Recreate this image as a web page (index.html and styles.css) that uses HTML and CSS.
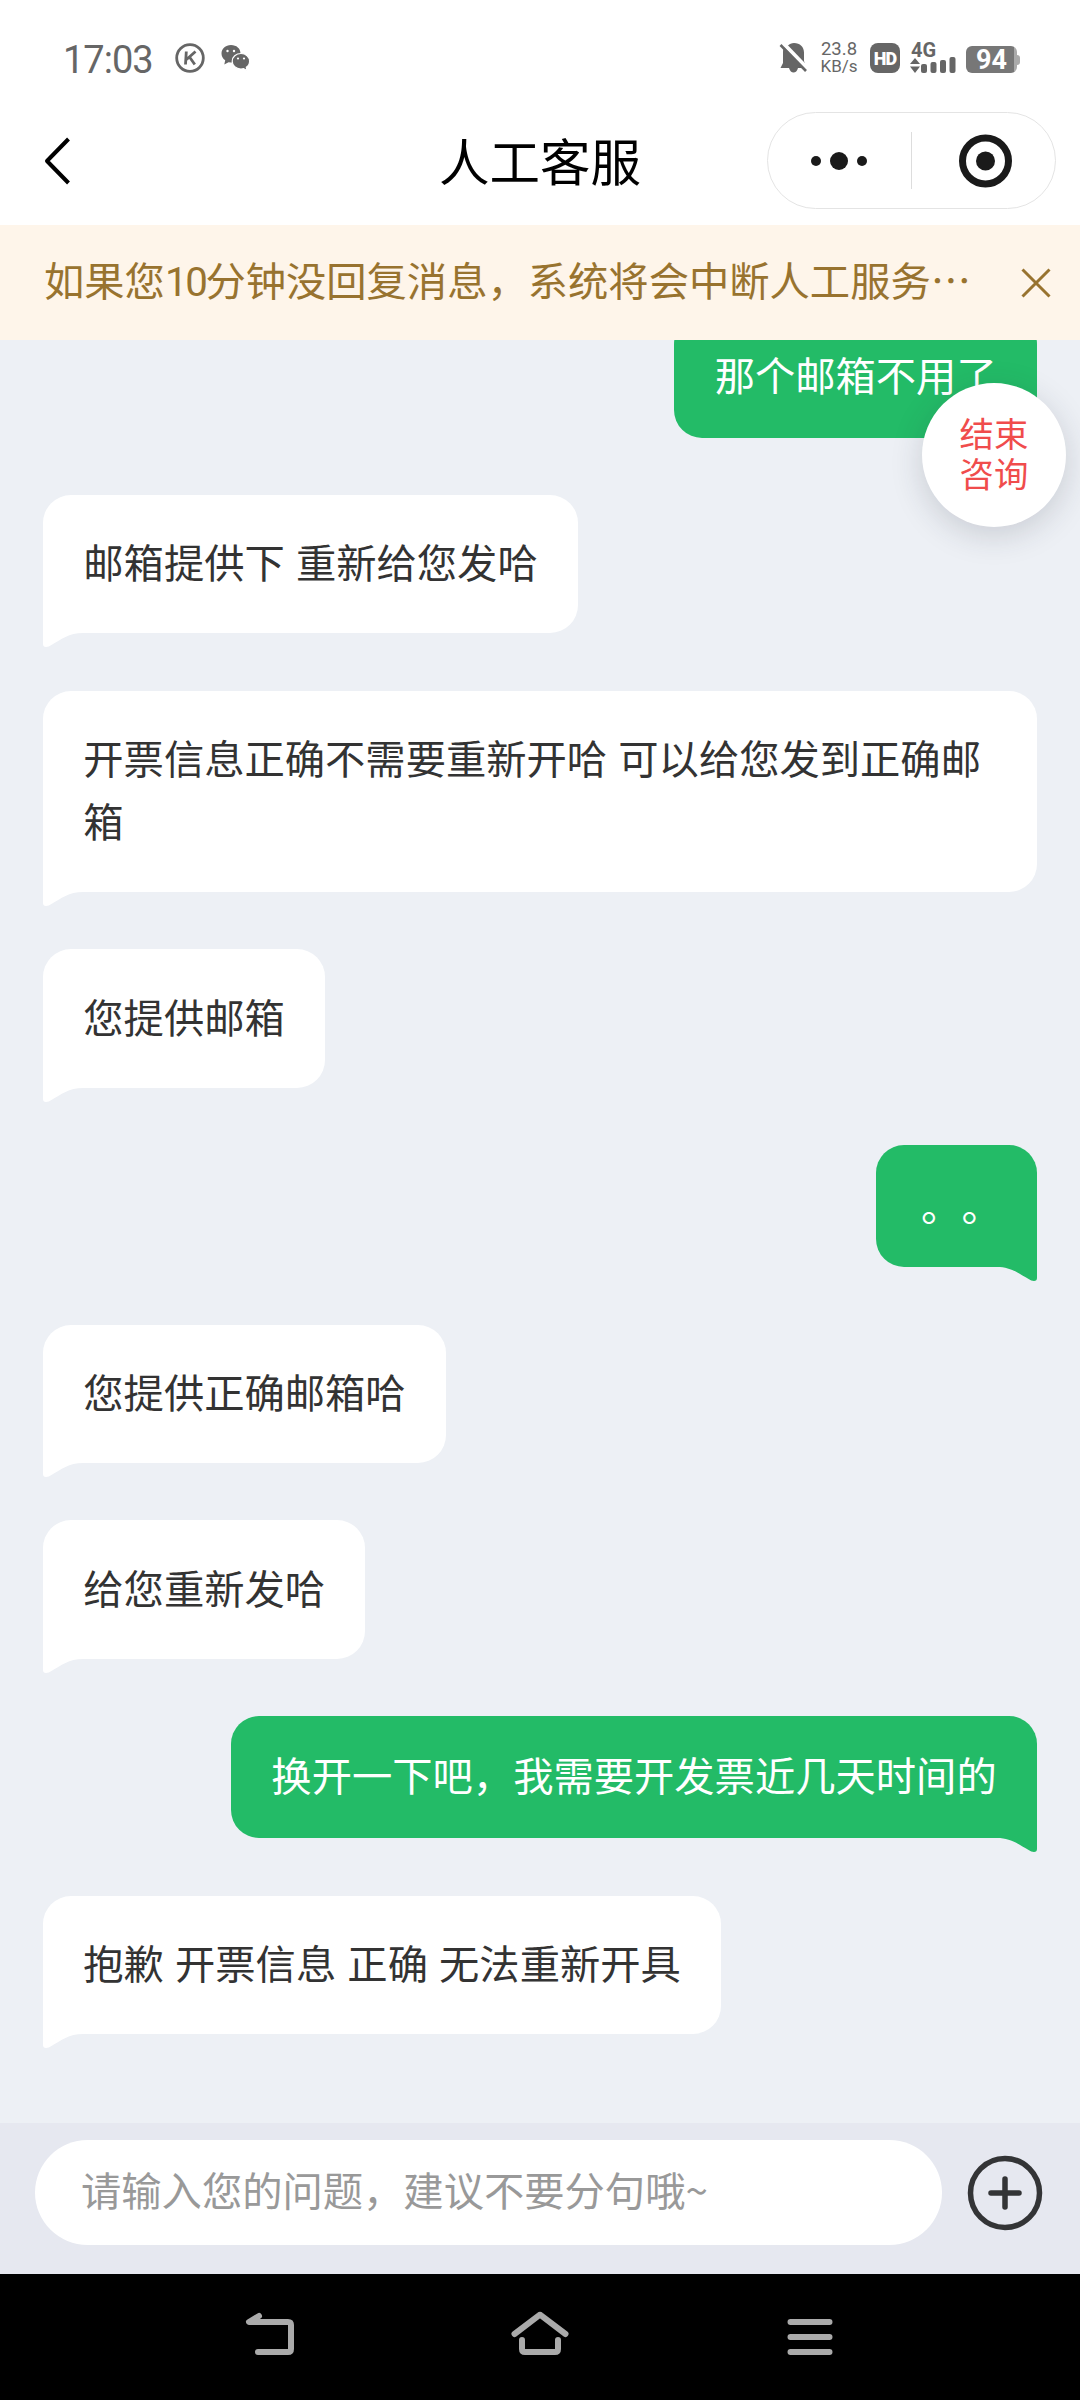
FILE: index.html
```html
<!DOCTYPE html>
<html lang="zh-CN">
<head>
<meta charset="utf-8">
<title>人工客服</title>
<link rel="stylesheet" href="styles.css">
</head>
<body>
<div class="screen">
  <header class="status">
    <span class="time">17:03</span>
    <svg class="ic-k" width="32" height="32" viewBox="0 0 32 32" fill="none" stroke="#666" stroke-width="2.800"><circle cx="16" cy="16" r="13.300"/><path d="M12.300 9.500 11.500 22.500M21.500 9.500 12.500 17.500M15.500 15 20.800 22.500" stroke-width="2.800"/></svg>
    <svg class="ic-chat" width="30" height="26" viewBox="0 0 30 26" fill="#666"><path d="M10 0C4.500 0 .500 3.700.500 8.500c0 2.800 1.300 5.200 3.700 6.800L3.300 19.500l4.200-2.300 2.500.3C15.500 17.500 19.500 13.500 19.500 8.500S15.500 0 10 0z"/><path d="M20 8.500c-5 0-8.800 3.300-8.800 7.700s3.800 7.800 8.800 7.800l2.500-.3 3.500 1.800-.700-3.200c2.200-1.500 3.300-3.600 3.300-6.100 0-4.400-3.700-7.700-8.600-7.700z" stroke="#fff" stroke-width="1.200"/><g fill="#fff"><circle cx="6.500" cy="6" r="1.200"/><circle cx="13" cy="6" r="1.200"/><circle cx="17" cy="13.500" r="1.100"/><circle cx="23" cy="13.500" r="1.100"/></g></svg>
    <div class="status-right">
      <svg class="ic-bell" width="30" height="32" viewBox="0 0 30 32"><path d="M9 3.500C10.500 2 12.500 1 15 1c6 0 10 4 10 9.500V19l2.500 7H19c-.800 3-2.500 4.500-4.500 4.500S11 29 10 26H1.500L4 21V10c0-2.500.500-4 1.500-5z" fill="#666"/><path d="M2 -1 29 27" stroke="#fff" stroke-width="4"/><path d="M1.500 3 27 29" stroke="#666" stroke-width="2.600"/></svg>
      <div class="speed"><span>23.8</span><span>KB/s</span></div>
      <div class="hd">HD</div>
      <div class="signal"><span class="net">4G</span>
        <svg class="bars" width="46" height="17" viewBox="0 0 46 17" fill="#666"><path d="M0 7 5 1 10 7zM0 9.500H10L5 16z"/><rect x="11" y="7" width="6" height="9" rx="2"/><rect x="20.500" y="5" width="6" height="11" rx="2"/><rect x="30" y="3" width="6" height="13" rx="2"/><rect x="39.500" y="0" width="6" height="16" rx="2"/></svg>
      </div>
      <div class="battery">94</div><i class="nub"></i>
    </div>
  </header>

  <nav class="titlebar">
    <svg class="back" width="30" height="50" viewBox="0 0 30 50" fill="none" stroke="#000" stroke-width="4" stroke-linejoin="round"><path d="M26.500 3 5 25 26.500 47"/></svg>
    <h1>人工客服</h1>
    <div class="capsule">
      <svg width="143" height="94" viewBox="0 0 143 94" fill="#1a1a1a"><circle cx="48" cy="47" r="5"/><circle cx="71" cy="47" r="9"/><circle cx="94" cy="47" r="5"/></svg>
      <i class="split"></i>
      <svg width="142" height="94" viewBox="0 0 142 94"><circle cx="73.500" cy="47" r="23" fill="none" stroke="#1a1a1a" stroke-width="7"/><circle cx="73.500" cy="47" r="9.500" fill="#1a1a1a"/></svg>
    </div>
  </nav>

  <div class="notice">
    <p>如果您<span class="num">10</span>分钟没回复消息，系统将会中断人工服务…</p>
    <svg width="30" height="30" viewBox="0 0 30 30" stroke="#98732f" stroke-width="3"><path d="M1.500 1.500 28.500 28.500M28.500 1.500 1.500 28.500"/></svg>
  </div>

  <svg class="defs" width="0" height="0"><symbol id="tail" viewBox="0 0 40 15"><path d="M0 0H40V1C26 1 18 7.500 8 13.300Q6 15 3 15Q0 15 0 12Z"/></symbol></svg>

  <main class="chat">
    <div class="msg me">那个邮箱不用了<svg class="tail"><use href="#tail"/></svg></div>
    <div class="msg">邮箱提供下 重新给您发哈<svg class="tail"><use href="#tail"/></svg></div>
    <div class="msg">开票信息正确不需要重新开哈 可以给您发到正确邮箱<svg class="tail"><use href="#tail"/></svg></div>
    <div class="msg">您提供邮箱<svg class="tail"><use href="#tail"/></svg></div>
    <div class="msg me stops">。。<svg class="tail"><use href="#tail"/></svg></div>
    <div class="msg">您提供正确邮箱哈<svg class="tail"><use href="#tail"/></svg></div>
    <div class="msg">给您重新发哈<svg class="tail"><use href="#tail"/></svg></div>
    <div class="msg me">换开一下吧，我需要开发票近几天时间的<svg class="tail"><use href="#tail"/></svg></div>
    <div class="msg">抱歉 开票信息 正确 无法重新开具<svg class="tail"><use href="#tail"/></svg></div>
    <button class="end">结束<br>咨询</button>
  </main>

  <div class="composer">
    <div class="field">请输入您的问题，建议不要分句哦~</div>
    <svg width="76" height="76" viewBox="0 0 76 76" fill="none" stroke="#333436" stroke-width="5.500"><circle cx="38" cy="38" r="34.500"/><path d="M38 24V52M24 38H52" stroke-linecap="round"/></svg>
  </div>

  <footer class="sysnav">
    <svg width="60" height="60" viewBox="0 0 60 60"><path d="M19 9 9 15H48Q51 15 51 18V42Q51 45 48 45H18"/></svg>
    <svg width="60" height="60" viewBox="0 0 60 60"><path d="M4.500 27 29 8.300Q30 7.500 31 8.300L55.500 27M12 33V42Q12 45 15 45H45Q48 45 48 42V33"/></svg>
    <svg width="60" height="60" viewBox="0 0 60 60"><path d="M10.500 15H49.500M10.500 30H49.500M10.500 45H49.500"/></svg>
  </footer>
</div>
</body>
</html>
```
FILE: styles.css
```css
* { box-sizing: border-box; margin: 0; padding: 0; }
body { font-family: "Noto Sans CJK SC", sans-serif; background: #fff; text-spacing-trim: space-all; }
svg { display: block; flex: none; }
.defs { position: absolute; }
.screen { width: 1080px; height: 2400px; display: flex; flex-direction: column; overflow: hidden; }

.status { height: 96px; padding: 20px 60px 0 63px; display: flex; align-items: center; color: #666; font-family: Roboto, sans-serif; }
.time { font-size: 38px; line-height: 40px; width: 111px; letter-spacing: -1px; padding-top: 4px; }
.ic-k { margin-right: 15px; }
.status-right { margin-left: auto; display: flex; align-items: center; }
.ic-bell { margin-right: 10px; }
.speed { width: 40px; display: flex; flex-direction: column; align-items: center; font-size: 17px; line-height: 17px; margin-right: 11px; }
.speed span:first-child { font-size: 18.500px; }
.hd { width: 30px; height: 30px; border-radius: 8px; background: #666; color: #fff; font-weight: 900; font-size: 18px; line-height: 31px; text-align: center; margin-right: 10px; letter-spacing: -1px; }
.signal { width: 46px; height: 30px; margin-right: 10px; display: flex; flex-direction: column; justify-content: space-between; }
.net { font-size: 20px; line-height: 15px; font-weight: 700; padding-left: 1px; height: 14px; }
.bars { margin-bottom: -1px; }
.battery { width: 51px; height: 27px; border-radius: 6px; background: linear-gradient(90deg, #777 48px, #aaa 48px); color: #fff; font-weight: 700; font-size: 27px; line-height: 28px; text-align: center; margin-top: 3px; }
.nub { width: 3px; height: 10px; background: #aaa; border-radius: 0 3px 3px 0; margin-top: 3px; }

.titlebar { height: 129px; padding: 0 24px 0 42px; display: grid; grid-template-columns: 289px 1fr 289px; align-items: center; }
.titlebar h1 { font-size: 50.500px; font-weight: 400; line-height: 60px; text-align: center; white-space: nowrap; margin-left: -18px; padding-bottom: 3px; }
.capsule { width: 289px; height: 97px; border: 1px solid #e4e4e4; border-radius: 49px; display: flex; align-items: center; }
.split { width: 1px; height: 57px; background: #ddd; }

.notice { height: 115px; background: #fef5ea; padding: 0 29px 0 44px; display: flex; align-items: center; justify-content: space-between; color: #98732f; }
.notice p { font-size: 40.300px; line-height: 60px; white-space: nowrap; padding-bottom: 3px; }
.num { font-family: Roboto, sans-serif; letter-spacing: -2.400px; }

.chat { position: relative; height: 1783px; background: #edf0f5; overflow: hidden; padding: 0 43px 89px; display: flex; flex-direction: column; justify-content: flex-end; align-items: flex-start; gap: 57.600px; }
.msg { position: relative; flex: none; max-width: 994px; background: #fff; color: #333; font-size: 40.300px; line-height: 62.600px; padding: 35.300px 40.300px 40.300px; border-radius: 28px 28px 28px 0; word-spacing: 2.100px; }
.me { align-self: flex-end; background: #23bb67; color: #fff; padding: 27.200px 40.300px 32.200px; border-radius: 28px 28px 0 28px; }
.stops { padding: 28.200px 35.300px 31.200px 45.300px; }
.tail { position: absolute; left: 0; top: calc(100% - 1px); width: 40px; height: 15px; fill: #fff; }
.me .tail { left: auto; right: 0; fill: #23bb67; transform: scaleX(-1); }
.end { position: absolute; right: 14px; top: 43px; width: 144px; height: 144px; padding-bottom: 7px; border: 0; border-radius: 50%; background: #fff; color: #f04c4c; font: 34.400px/40px "Noto Sans CJK SC", sans-serif; box-shadow: 0 8px 32px rgba(40, 45, 60, .18); }

.composer { height: 151px; background: #e6e8f0; padding: 17px 37px 0 35px; display: flex; align-items: flex-start; justify-content: space-between; }
.field { width: 907px; height: 105px; border-radius: 53px; background: #fff; color: #999; font-size: 40.300px; line-height: 98px; padding-left: 46px; white-space: nowrap; }
.composer svg { margin-top: 15px; }

.sysnav { height: 126px; background: #000; padding: 33px 240px 0; display: flex; justify-content: space-between; }
.sysnav svg { fill: none; stroke: #aaa; stroke-width: 6; stroke-linecap: round; stroke-linejoin: round; }
```
